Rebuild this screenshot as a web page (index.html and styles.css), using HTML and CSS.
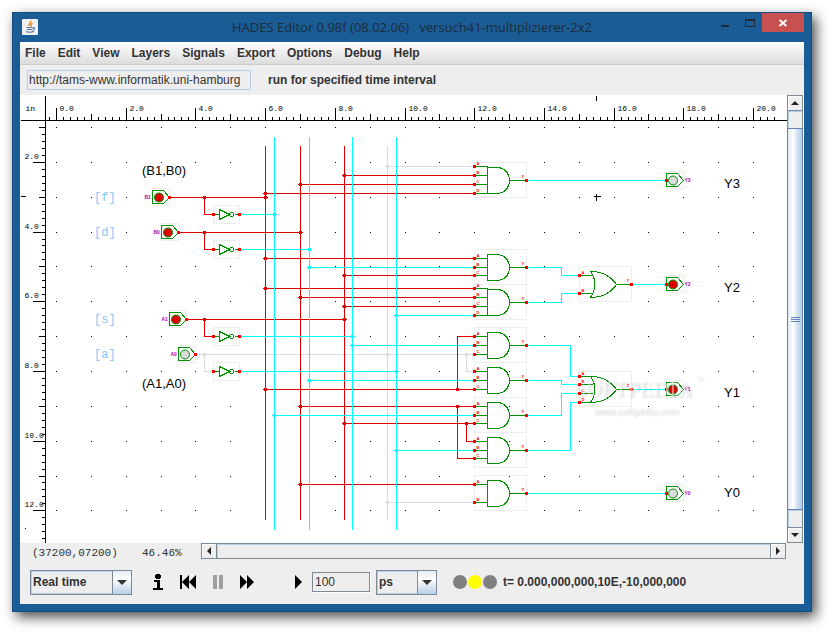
FILE: index.html
```html
<!DOCTYPE html>
<html lang="en">
<head>
<meta charset="utf-8">
<title>HADES Editor</title>
<link rel="stylesheet" href="styles.css">
</head>
<body>
<div class="window">
  <header class="titlebar">
    <svg class="app-icon" width="16" height="16" viewBox="0 0 16 16" aria-hidden="true">
      <rect width="16" height="16" rx="1" fill="#eef0f2"/>
      <path d="M8.500 2c2 1.500-3 2.500-1 5M10.500 4.500c-2 1-1.800 1.500-1 3" fill="none" stroke="#e8801c" stroke-width="1.300"/>
      <path d="M4.500 8.500h6M5 10.500h5M4 12.500c2 1 6 1 8-.2M10.500 9c3-1 2.500 1.500 0 2" fill="none" stroke="#54779c" stroke-width="1.200"/>
    </svg>
    <h1 class="title">HADES Editor 0.98f (08.02.06)&nbsp;&nbsp; versuch41-multiplizierer-2x2</h1>
    <div class="window-buttons">
      <button class="win-btn" type="button" aria-label="Minimize"><svg width="8" height="10"><path d="M0 8h8" stroke="#1e2a34" stroke-width="2"/></svg></button>
      <button class="win-btn" type="button" aria-label="Maximize"><svg width="10" height="8"><path d="M.5 0v7.500h9V0" fill="none" stroke="#1e2a34"/><path d="M0 1h10" stroke="#1e2a34" stroke-width="2"/></svg></button>
      <button class="win-btn close" type="button" aria-label="Close"><svg width="8" height="8"><path d="M.5 1l7 6M7.500 1l-7 6" stroke="#fff" stroke-width="1.800"/></svg></button>
    </div>
  </header>

  <nav class="menubar">
    <button type="button">File</button>
    <button type="button">Edit</button>
    <button type="button">View</button>
    <button type="button">Layers</button>
    <button type="button">Signals</button>
    <button type="button">Export</button>
    <button type="button">Options</button>
    <button type="button">Debug</button>
    <button type="button">Help</button>
  </nav>

  <div class="addressbar">
    <input class="address" type="text" aria-label="Address" value="http://tams-www.informatik.uni-hamburg">
    <span>run for specified time interval</span>
  </div>

  <main class="workspace">
    <svg class="schematic" viewBox="20 95 767 448" preserveAspectRatio="xMinYMin meet" role="img" aria-label="Circuit schematic">
      <g id="rulers" transform="translate(.5 .5)"></g>
      <g id="circuit" transform="translate(.5 .5)"></g>
      <g class="notes">
        <text x="142" y="175">(B1,B0)</text>
        <text x="142" y="388">(A1,A0)</text>
        <text x="724" y="188">Y3</text>
        <text x="724" y="292">Y2</text>
        <text x="724" y="397">Y1</text>
        <text x="724" y="497">Y0</text>
      </g>
      <g class="keys">
        <text x="94" y="201">[f]</text>
        <text x="94" y="236">[d]</text>
        <text x="94" y="323">[s]</text>
        <text x="94" y="358">[a]</text>
      </g>
      <g class="stamp">
        <text class="stamp-name" x="574" y="396">SOFTPEDIA</text>
        <text class="stamp-tm" x="695" y="382">™</text>
        <text class="stamp-url" x="594" y="414">www.softpedia.com</text>
      </g>
    </svg>
    <div class="scroll vertical">
      <button type="button" aria-label="Scroll up"><svg width="8" height="4"><path d="M0 4l4-4 4 4z"/></svg></button>
      <div class="track-gap"></div>
      <div class="thumb"><i></i><i></i><i></i></div>
      <div class="track-gap"></div>
      <button type="button" aria-label="Scroll down"><svg width="8" height="4"><path d="M0 0l4 4 4-4z"/></svg></button>
    </div>
  </main>

  <div class="statusbar">
    <span class="position">(37200,07200)</span>
    <span class="zoom">46.46%</span>
    <div class="scroll horizontal">
      <button type="button" aria-label="Scroll left"><svg width="4" height="8"><path d="M4 0L0 4l4 4z"/></svg></button>
      <div class="track"></div>
      <button type="button" aria-label="Scroll right"><svg width="4" height="8"><path d="M0 0l4 4-4 4z"/></svg></button>
    </div>
  </div>

  <footer class="controls">
    <span class="combo mode">
      <select aria-label="Simulation mode"><option>Real time</option></select>
      <span class="combo-arrow"><svg width="10" height="5"><path d="M0 0h10L5 5z"/></svg></span>
    </span>
    <div class="transport">
      <button type="button" aria-label="Info"><svg width="10" height="16"><path d="M3 0h4v1h1v3H7v1H3V4H2V1h1zM1 6h6v8h3v2H0v-2h4V8H1z"/></svg></button>
      <button type="button" aria-label="Rewind"><svg width="16" height="14"><path d="M0 0h2v14H0zM2 7l7-7v14zM9 7l7-7v14z"/></svg></button>
      <button type="button" aria-label="Pause" disabled><svg width="10" height="14"><path d="M0 0h4v14H0zM6 0h4v14H6z"/></svg></button>
      <button type="button" aria-label="Run"><svg width="14" height="14"><path d="M0 0l7 7-7 7zM7 0l7 7-7 7z"/></svg></button>
      <button class="step" type="button" aria-label="Run interval"><svg width="7" height="14"><path d="M0 0l7 7-7 7z"/></svg></button>
    </div>
    <input class="interval" type="text" aria-label="Interval" value="100">
    <span class="combo unit">
      <select aria-label="Time unit"><option>ps</option></select>
      <span class="combo-arrow"><svg width="10" height="5"><path d="M0 0h10L5 5z"/></svg></span>
    </span>
    <svg class="lamps" width="44" height="14" aria-hidden="true">
      <circle cx="7" cy="7" r="7" fill="#808080"/><circle cx="22" cy="7" r="7" fill="#ff0"/><circle cx="37" cy="7" r="7" fill="#808080"/>
    </svg>
    <output class="time">t= 0.000,000,000,10E,-10,000,000</output>
  </footer>
</div>
<script src="schematic.js"></script>
</body>
</html>
```
FILE: styles.css
```css
* { box-sizing: border-box; }

body {
  margin: 0;
  padding: 12px 20px 20px 12px;
  height: 100vh;
  display: flex;
  background: #fff;
  color: #333;
  font: bold 12px/16px "Liberation Sans", Arial, sans-serif;
}

button, input, select { font: inherit; color: inherit; }
button { border: 0; padding: 0; background: none; }
svg { display: block; }

.window {
  flex: 1;
  min-width: 0;
  display: flex;
  flex-direction: column;
  padding: 0 8px 8px;
  background: #1a5c96;
  box-shadow: inset 0 0 0 1px #164d7e, 4px 5px 12px rgba(0, 0, 0, .7);
}

/* Title bar */
.titlebar {
  height: 30px;
  display: grid;
  grid-template-columns: 120px 1fr 120px;
  align-items: center;
}
.app-icon { margin-left: 2px; }
.title {
  margin: 0;
  text-align: center;
  white-space: nowrap;
  font: 13px/20px "Open Sans", "Noto Sans", sans-serif;
  color: #1c2c3a;
}
.window-buttons { display: flex; justify-content: flex-end; align-self: start; padding-top: 1px; }
.win-btn { width: 25px; height: 19px; display: grid; place-items: center; }
.win-btn.close { width: 42px; background: #c75050; }

/* Menu */
.menubar {
  height: 23px;
  display: flex;
  gap: 12px;
  padding: 0 5px;
  background: linear-gradient(#fff, #dcdcdc);
  border-bottom: 1px solid #ccc;
}

.addressbar {
  height: 30px;
  display: flex;
  align-items: center;
  gap: 17px;
  padding: 0 7px;
  background: #eee;
}
.address {
  width: 224px;
  height: 20px;
  padding: 0 1px;
  border: 1px solid #b8cfe5;
  background: #eee;
  font-weight: normal;
}

/* Drawing area */
.workspace { flex: 1; min-height: 0; display: flex; background: #fff; }
.schematic { flex: 1; min-width: 0; height: 100%; }

.tick, .wire, .box, .part { fill: none; stroke-width: 1; shape-rendering: crispEdges; }
.tick { stroke: #000; }
.dot { fill: #000; shape-rendering: crispEdges; }
.ruler-text { font: 8px "Liberation Mono", monospace; fill: #000; }
.box { stroke: #eee; }
.part { stroke: #009000; }
.red { stroke: #e00000; }
.cyan { stroke: #0ff; }
.gray { stroke: #dcdcdc; }
.node { stroke: none; shape-rendering: crispEdges; }
.node.red, .lamp.red { fill: #e00000; }
.node.cyan { fill: #0ff; }
.node.gray, .lamp.gray { fill: #dcdcdc; }
.lamp { stroke: #009000; }
.port { fill: #f00; shape-rendering: crispEdges; }
.port-text { font: bold 4px "Liberation Sans", sans-serif; fill: #f00; }
.pin-text { font: bold 5px "Liberation Sans", sans-serif; fill: #b000b0; }
.notes { font: 13px "Liberation Sans", sans-serif; fill: #000; }
.keys { font: 12px "Liberation Mono", monospace; fill: #84c8fc; }
.stamp { fill: #fff; fill-opacity: .5; filter: drop-shadow(1px 1px 1px rgba(0, 0, 0, .35)); }
.stamp-name { font: 22px "Liberation Serif", serif; }
.stamp-tm { font: 8px "Liberation Sans", sans-serif; }
.stamp-url { font: bold 9px "Liberation Sans", sans-serif; }

/* Scroll bars */
.scroll { display: flex; background: #eee; }
.scroll button {
  flex: none;
  width: 16px;
  height: 16px;
  display: grid;
  place-items: center;
  border: 1px solid #7a8a99;
  background: #eee;
  box-shadow: inset 1px 1px #fff;
}
.scroll svg { fill: #222; }
.vertical { flex-direction: column; width: 16px; margin-right: 1px; }
.track-gap { height: 17px; border: solid #7a8a99; border-width: 0 1px; box-shadow: inset 1px 1px #b8cfe5; }
.thumb {
  flex: 1;
  display: flex;
  flex-direction: column;
  justify-content: center;
  align-items: center;
  gap: 1px;
  border: 1px solid #6382bf;
  background: linear-gradient(90deg, #dde8f3, #fff 35%, #c8daec 75%, #b8cfe5);
}
.thumb i { width: 9px; height: 1px; background: #6382bf; }

.statusbar { height: 17px; display: flex; background: #eee; }
.statusbar span { padding-top: 2px; font: 11px/16px "Liberation Mono", monospace; }
.position { width: 122px; padding-left: 12px; }
.zoom { width: 59px; }
.horizontal { flex: 1; height: 16px; margin-right: 18px; }
.track { flex: 1; border: solid #7a8a99; border-width: 1px 0; box-shadow: inset 1px 1px #b8cfe5; }

/* Simulation controls */
.controls {
  height: 44px;
  display: flex;
  align-items: center;
  padding: 0 10px;
  background: #eee;
}
.combo { display: grid; grid-template-columns: 1fr 20px; height: 25px; }
.combo select {
  grid-area: 1 / 1 / 2 / 3;
  appearance: none;
  width: 100%;
  padding: 0 2px;
  border: 1px solid #7a8a99;
  border-radius: 0;
  background: #eee;
  box-shadow: inset 0 0 0 1px #b8cfe5;
}
.combo-arrow {
  grid-area: 1 / 2 / 2 / 3;
  display: grid;
  place-items: center;
  border: 1px solid #7a8a99;
  background: linear-gradient(#e4edf6, #fff 35%, #b8cfe5);
  pointer-events: none;
}
.combo-arrow svg { fill: #333; }
.mode { width: 102px; }
.unit { width: 61px; margin: 0 16px 0 6px; }
.transport { display: flex; align-items: center; gap: 17px; margin: 0 10px 0 21px; }
.transport button:disabled svg { fill: #a0a0a0; }
.transport .step { margin-left: 24px; }
.interval {
  width: 58px;
  height: 20px;
  padding: 0 2px;
  border: 1px solid #7a8a99;
  background: #eee;
  box-shadow: 1px 1px #fff;
  font-weight: normal;
}
.time { margin-left: 6px; white-space: nowrap; }
```
FILE: schematic.js
```js
const SVG_NS = "http://www.w3.org/2000/svg";
const rulers = document.getElementById("rulers");
const circuit = document.getElementById("circuit");

function add(parent, tag, className, attrs, text) {
  const el = document.createElementNS(SVG_NS, tag);
  el.setAttribute("class", className);
  for (const key in attrs) el.setAttribute(key, attrs[key]);
  if (text) el.textContent = text;
  parent.appendChild(el);
}
const path = (className, d) => add(circuit, "path", className, { d });
const port = (x, y) => add(circuit, "rect", "port", { x: x - 1.5, y: y - 1.5, width: 3, height: 3 });

/* Rulers and grid: one unit is 34.85 px, five minor ticks to a unit */
const UNIT = 34.85;
const gridX = n => Math.round(56 + UNIT * n);
const gridY = n => Math.round(127 + UNIT * (n - 1));

let ticks = "M20 120H787M45 95V543M596 95V100M20 196H25";
for (let i = -1; i <= 103; i++) {
  const top = i % 10 === 0 ? 107 : i % 5 === 0 ? 113 : 116;
  ticks += `M${gridX(i / 5)} ${top}V120`;
}
for (let i = 5; i <= 64; i++) {
  const left = i % 10 === 0 ? 32 : i % 5 === 0 ? 38 : 41;
  ticks += `M${left} ${gridY(i / 5)}H45`;
}
/* Cursor cross */
ticks += "M593 196H600M596 193V200";
add(rulers, "path", "tick", { d: ticks });
add(rulers, "text", "ruler-text", { x: 25, y: 110 }, "in");
for (let n = 0; n <= 20; n += 2) {
  add(rulers, "text", "ruler-text", { x: gridX(n) + 3, y: 110 }, n + ".0");
}
for (let n = 2; n <= 12; n += 2) {
  add(rulers, "text", "ruler-text", { x: 24, y: gridY(n) - 4 }, n + ".0");
}
for (let col = 0; col <= 20; col++) {
  for (let row = 1; row <= 12; row++) {
    add(rulers, "rect", "dot", { x: gridX(col) - 0.5, y: gridY(row) - 0.5, width: 1, height: 1 });
  }
}
add(rulers, "rect", "dot", { x: 24.5, y: 527.5, width: 1, height: 1 });

/* Component outlines */
const AND_Y = [180, 267, 302, 345, 380, 415, 450, 493];
AND_Y.forEach(y => path("box", `M474 ${y - 18}h52v35h-52z`));
[284, 389].forEach(y => path("box", `M579 ${y - 18}h52v35h-52z`));

/* Wires */
path("wire gray", "M387 145V519M387 166H474M195 354H474M204 354V371H213M466 354V371H474M387 502H474");
path("wire red",
  "M265 145V519M300 145V519M344 145V519" +
  "M344 175H474M300 184H474M265 193H474" +
  "M169 197H265M204 197V214H213M178 232H300M204 232V249H213" +
  "M265 258H474M344 275H474M265 288H474M300 297H474M344 306H474" +
  "M187 319H344M204 319V336H213" +
  "M474 336H457V389M265 389H474M300 406H474M457 406V458H474" +
  "M344 423H474M466 423V441H474M300 484H474");
path("wire cyan",
  "M274 136V529M309 136V529M352 136V529M396 136V529" +
  "M239 214H274M239 249H309M309 267H474M396 315H474M239 336H352M352 345H474" +
  "M239 371H396M309 380H474M274 415H474M396 450H474" +
  "M526 180H666M526 267H561V275H579M526 302H561V293H579" +
  "M526 345H570V376H579M526 380H561V384H579M526 415H561V393H579M526 450H570V402H579" +
  "M526 493H666M631 284H666M631 389H666");

const nodes = {
  gray: [[387, 166], [204, 354], [387, 354], [466, 354], [387, 502]],
  red: [[344, 175], [300, 184], [265, 193], [265, 197], [204, 197], [300, 232], [204, 232],
    [265, 258], [344, 275], [265, 288], [300, 297], [344, 306], [344, 319], [204, 319],
    [265, 389], [457, 389], [300, 406], [457, 406], [344, 423], [466, 423], [300, 484]],
  cyan: [[274, 214], [309, 249], [309, 267], [396, 315], [352, 336], [352, 345],
    [396, 371], [309, 380], [274, 415], [396, 450]]
};
for (const color in nodes) {
  for (const [x, y] of nodes[color]) {
    path("node " + color, `M${x - 1.5} ${y - 1.5}h3v3h-3zM${x - 2.5} ${y - .5}h5v1h-5z`);
  }
}

/* Gates */
function ports(x, outX, outY, inputs) {
  inputs.forEach((y, i) => {
    port(x, y);
    add(circuit, "text", "port-text", { x: x + 2, y: y - 2 }, "ABCD"[i]);
  });
  port(outX, outY);
  add(circuit, "text", "port-text", { x: outX - 5, y: outY - 3 }, "Y");
}

function andGate(y, inputs) {
  path("part", `M487 ${y - 13}H497C513 ${y - 12} 513 ${y + 12} 497 ${y + 13}H487ZM509 ${y}H526` +
    inputs.map(v => `M474 ${v}H487`).join(""));
  ports(474, 526, y, inputs);
}
andGate(180, [166, 175, 184, 193]);
andGate(267, [258, 267, 275]);
andGate(302, [288, 297, 306, 315]);
andGate(345, [336, 345, 354]);
andGate(380, [371, 380, 389]);
andGate(415, [406, 415, 423]);
andGate(450, [441, 450, 458]);
andGate(493, [484, 502]);

function orGate(y, inputs) {
  path("part", `M590 ${y - 13}Q599 ${y} 590 ${y + 13}Q607 ${y + 13} 616 ${y}Q607 ${y - 13} 590 ${y - 13}M616 ${y}H631` +
    inputs.map(v => `M579 ${v}H592`).join(""));
  ports(579, 631, y, inputs);
}
orGate(284, [275, 293]);
orGate(389, [376, 384, 393, 402]);

[214, 249, 336, 371].forEach(y => {
  path("box", `M213 ${y - 9}h26v18h-26z`);
  path("part", `M213 ${y}H219M219 ${y - 5}V${y + 5}L229 ${y}ZM234 ${y}H239`);
  add(circuit, "circle", "part", { cx: 231, cy: y, r: 2 });
  port(213, y);
  port(239, y);
});

/* Input switches and output lamps */
function pin(x, y, color, name, labelX) {
  path("box", `M${x} ${y - 9}h17v17h-17z`);
  path("part", `M${x} ${y - 7}h11l6 7l-6 6h-11z`);
  add(circuit, "circle", "lamp " + color, { cx: x + 6.5, cy: y, r: 4.5 });
  add(circuit, "text", "pin-text", { x: labelX, y: y + 1 }, name);
}
pin(152, 197, "red", "B1", 144);
pin(161, 232, "red", "B0", 153);
pin(169, 319, "red", "A1", 161);
pin(178, 354, "gray", "A0", 170);
[[169, 197], [178, 232], [186, 319], [195, 354]].forEach(([x, y]) => port(x, y));
pin(666, 180, "gray", "Y3", 684);
pin(666, 284, "red", "Y2", 684);
pin(666, 389, "red", "Y1", 684);
pin(666, 493, "gray", "Y0", 684);
[180, 284, 389, 493].forEach(y => port(666, y));
```
